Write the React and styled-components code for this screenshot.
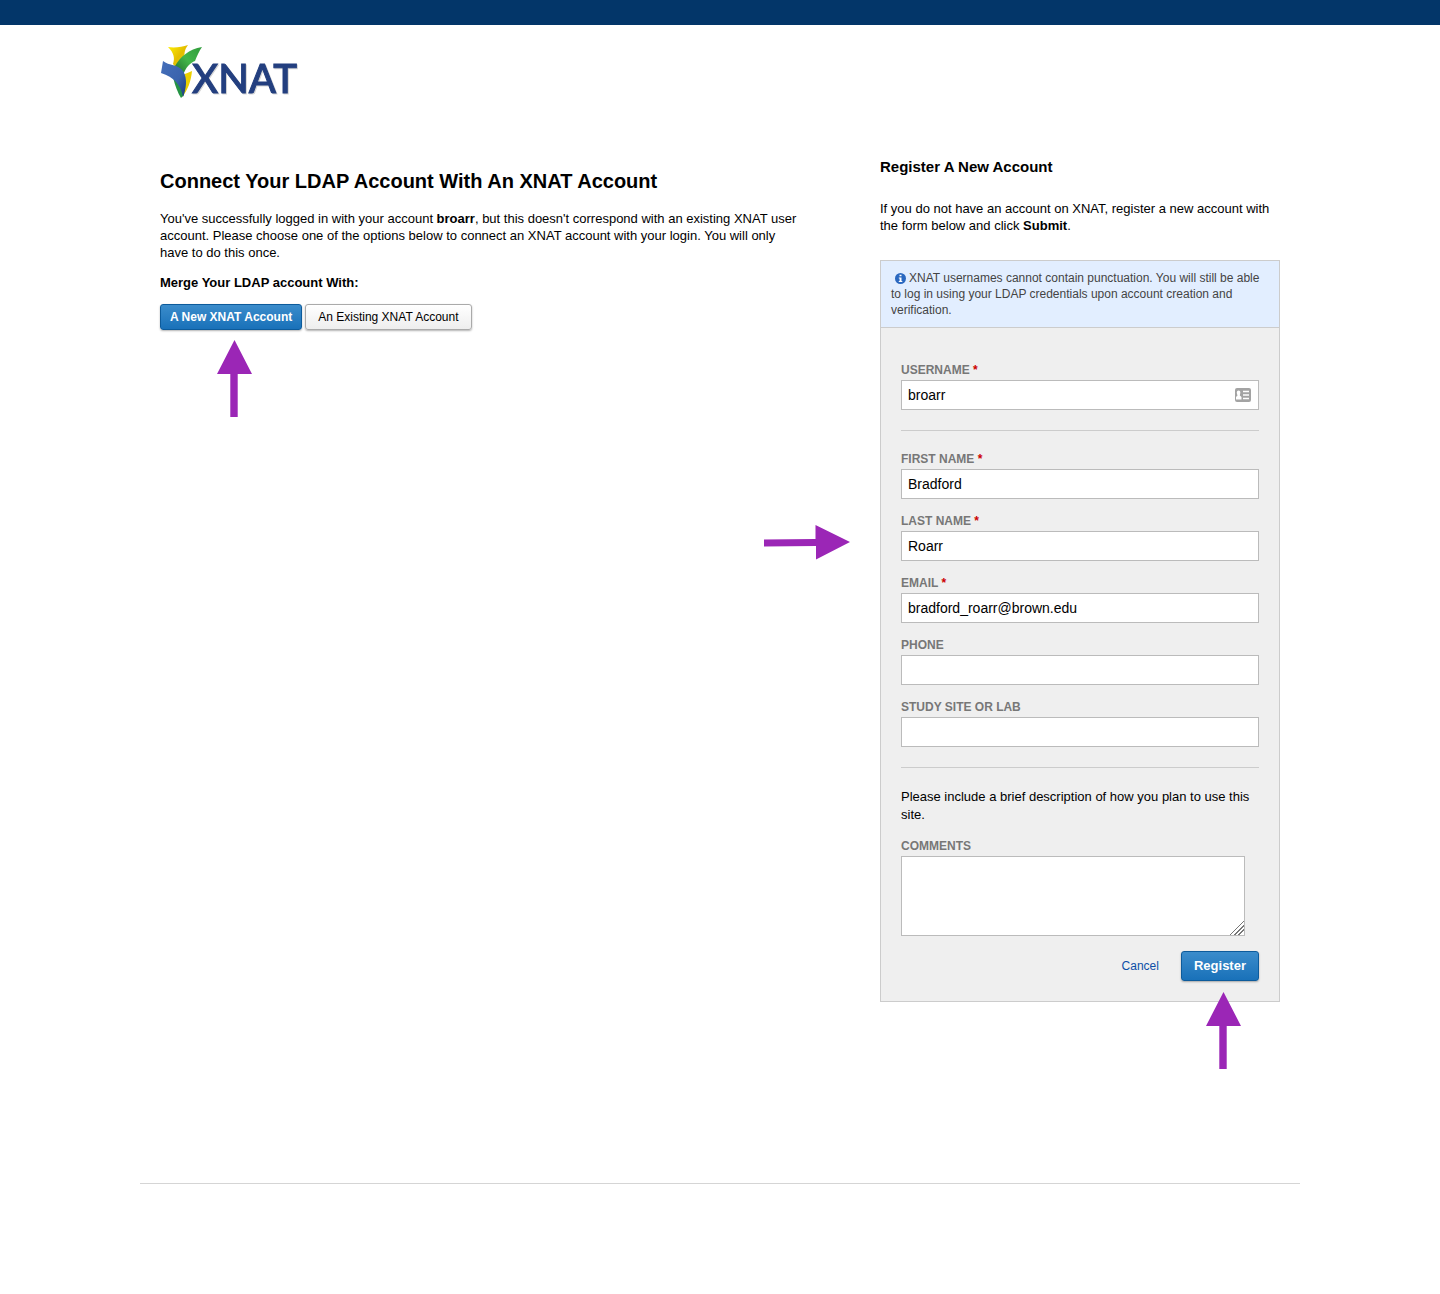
import React from "react";
import styled, { createGlobalStyle, css } from "styled-components";

const GlobalStyle = createGlobalStyle`
  *, *::before, *::after { box-sizing: border-box; }
  body {
    margin: 0;
    background: #fff;
    color: #000;
    font: 13px/17px Arial, "Liberation Sans", sans-serif;
  }
  h1, h2, p, hr { margin: 0; }
  button, input, textarea { font-family: inherit; margin: 0; }
`;

const TopBar = styled.div`
  height: 25px;
  background: #033669;
`;

const Page = styled.div`
  max-width: 1160px;
  margin: 0 auto;
  padding-bottom: 110px;
`;

const Header = styled.header`
  padding: 19px 20px 0;
`;

const LogoLink = styled.a`
  display: block;
  width: 140px;
`;

const LogoSvg = styled.svg`
  display: block;
  overflow: visible;

  text {
    font-family: Lato, "Open Sans", sans-serif;
    font-size: 40px;
    font-weight: 500;
    filter: drop-shadow(1px 1px 0 #d5d5d5);
  }
`;

const Main = styled.main`
  display: flex;
  align-items: flex-start;
  gap: 80px;
  padding: 58px 20px 181px;
  border-bottom: 1px solid #d5d5d5;
`;

const Intro = styled.section`
  flex: 1;
  min-width: 0;
  padding-top: 11px;
`;

const Title = styled.h1`
  font-size: 20px;
  line-height: 24px;
  margin-bottom: 17px;
`;

const Text = styled.p`
  margin-bottom: 13px;
`;

const ButtonRow = styled.div`
  display: flex;
  gap: 3px;
`;

const Anchor = styled.div`
  position: relative;
`;

const primary = css`
  padding: 0 ${(p) => (p.$large ? "12px" : "9px")};
  color: #fff;
  font-weight: 700;
  border-color: #0d5b9b;
  background: linear-gradient(#3b8ccb, #1971b9);
`;

const Button = styled.button`
  height: ${(p) => (p.$large ? "30px" : "26px")};
  padding: 0 12px;
  border: 1px solid #aaa;
  border-radius: 3px;
  background: linear-gradient(#fff, #eee);
  color: #000;
  font-size: ${(p) => (p.$large ? "13px" : "12px")};
  line-height: 16px;
  white-space: nowrap;
  box-shadow: 0 1px 2px rgba(0, 0, 0, 0.3);
  cursor: pointer;
  ${(p) => p.$primary && primary}
`;

const Aside = styled.section`
  position: relative;
  flex: 0 0 400px;
`;

const AsideTitle = styled.h2`
  font-size: 15px;
  line-height: 18px;
  margin-bottom: 24px;
`;

const AsideText = styled.p`
  margin-bottom: 26px;
`;

const Panel = styled.form`
  border: 1px solid #ccc;
  background: #efefef;
`;

const Notice = styled.div`
  padding: 9px 10px;
  border-bottom: 1px solid #ccc;
  background: #e2eeff;
  color: #444;
  font-size: 12px;
  line-height: 16px;
`;

const InfoIcon = styled.svg`
  margin: 0 3px 0 4px;
  vertical-align: -2px;
`;

const Fields = styled.div`
  padding: 34px 20px 20px;
`;

const Group = styled.div`
  display: flex;
  flex-direction: column;
  gap: 14px;
`;

const FieldBox = styled.div`
  display: flex;
  flex-direction: column;
  gap: 2px;
`;

const Label = styled.label`
  color: #777;
  font-size: 12px;
  font-weight: 700;
  line-height: 16px;
  text-transform: uppercase;
`;

const Required = styled.span`
  color: #c00;
`;

const InputWrap = styled.div`
  position: relative;
  display: flex;
`;

const Input = styled.input`
  flex: 1;
  min-width: 0;
  height: 30px;
  padding: 0 6px;
  border: 1px solid #bbb;
  border-radius: 0;
  background: #fff;
  color: #000;
  font-size: 14px;
`;

const CardIcon = styled.svg`
  position: absolute;
  right: 8px;
  top: 8px;
`;

const TextArea = styled.textarea`
  display: block;
  width: calc(100% - 14px);
  height: 80px;
  padding: 6px;
  border: 1px solid #bbb;
  border-radius: 0;
  background: #fff;
  font-size: 14px;
  resize: both;

  &::-webkit-resizer {
    background: linear-gradient(
      135deg,
      transparent 50%,
      #777 50% 56%,
      transparent 56% 64%,
      #777 64% 70%,
      transparent 70% 78%,
      #777 78% 84%,
      transparent 84%
    );
  }
`;

const Divider = styled.hr`
  height: 1px;
  margin: 20px 0;
  border: 0;
  background: #ccc;
`;

const Hint = styled.p`
  line-height: 18px;
`;

const Actions = styled.div`
  display: flex;
  justify-content: flex-end;
  align-items: center;
  gap: 22px;
  margin-top: 15px;
`;

const CancelLink = styled.a`
  color: #0d4ea6;
  font-size: 12px;
  text-decoration: none;
`;

const ArrowSvg = styled.svg`
  position: absolute;
  pointer-events: none;
  ${(p) =>
    p.$side === "left"
      ? css`
          right: calc(100% + 30px);
          top: 367px;
        `
      : css`
          top: ${p.$gap};
          left: calc(50% - 14px);
        `}
`;

function ArrowUp({ gap }) {
  return (
    <ArrowSvg $gap={gap} width="35" height="77" viewBox="0 0 35 77" aria-hidden="true">
      <path d="M17.5 0 35 34H20.7V77H13.3V34H0Z" fill="#9b26b6" />
    </ArrowSvg>
  );
}

function ArrowRight() {
  return (
    <ArrowSvg $side="left" width="87" height="35" viewBox="0 0 87 35" aria-hidden="true">
      <path d="M87 17 53 34.5V21L1 21.5V14.5L52.500 14V0Z" fill="#9b26b6" />
    </ArrowSvg>
  );
}

function Logo() {
  return (
    <LogoSvg width="140" height="56" viewBox="0 0 140 56" role="img" aria-label="XNAT">
      <defs>
        <linearGradient id="gold" x1="0" y1="0" x2="1" y2="1">
          <stop offset="0" stopColor="#fff000" />
          <stop offset="0.5" stopColor="#e3bd00" />
          <stop offset="1" stopColor="#f4df10" />
        </linearGradient>
        <linearGradient id="leaf" x1="1" y1="0" x2="0" y2="1">
          <stop offset="0" stopColor="#2f9c3c" />
          <stop offset="0.5" stopColor="#43b649" />
          <stop offset="1" stopColor="#1f6d2c" />
        </linearGradient>
        <linearGradient id="sky" x1="0" y1="0" x2="1" y2="1">
          <stop offset="0" stopColor="#456fba" />
          <stop offset="0.6" stopColor="#3a63ad" />
          <stop offset="1" stopColor="#1c3a78" />
        </linearGradient>
      </defs>
      <path d="M8 3C15 4 22 3 28 1C24 6 24 11 25 17L18 26L13 20C15 14 14 9 8 3Z" fill="url(#gold)" />
      <path d="M22 31C26 30 29 28 32 27C31 37 28 46 22 53Z" fill="#ecd000" />
      <path d="M15 22C20 13 29 5 42 3C39 7 37 12 35 17C30 19 26 23 23 31C21 27 19 24 15 22Z" fill="url(#leaf)" />
      <path d="M13 33C15 42 18 49 21 54L24 51C25 43 23 35 20 31Z" fill="#259344" />
      <path d="M3 17C9 22 18 20 23 27C28 35 26 45 23 53C21 41 14 33 1 29Z" fill="url(#sky)" />
      <text x="32" y="49" fill="#233f7f" stroke="#233f7f" strokeWidth="1">
        XNAT
      </text>
    </LogoSvg>
  );
}

function Field({ id, label, required, value, children }) {
  return (
    <FieldBox>
      <Label htmlFor={id}>
        {label} {required && <Required>*</Required>}
      </Label>
      <InputWrap>
        <Input id={id} name={id} type="text" required={required} defaultValue={value} />
        {children}
      </InputWrap>
    </FieldBox>
  );
}

export default function App() {
  return (
    <>
      <GlobalStyle />
      <TopBar />
      <Page>
        <Header>
          <LogoLink href="#home">
            <Logo />
          </LogoLink>
        </Header>
        <Main>
          <Intro>
            <Title>Connect Your LDAP Account With An XNAT Account</Title>
            <Text>
              You've successfully logged in with your account <b>broarr</b>, but this doesn't correspond with an
              existing XNAT user account. Please choose one of the options below to connect an XNAT account with your
              login. You will only have to do this once.
            </Text>
            <Text>
              <b>Merge Your LDAP account With:</b>
            </Text>
            <ButtonRow>
              <Anchor>
                <Button type="button" $primary>
                  A New XNAT Account
                </Button>
                <ArrowUp gap="36px" />
              </Anchor>
              <Button type="button">An Existing XNAT Account</Button>
            </ButtonRow>
          </Intro>
          <Aside>
            <AsideTitle>Register A New Account</AsideTitle>
            <AsideText>
              If you do not have an account on XNAT, register a new account with the form below and click{" "}
              <b>Submit</b>.
            </AsideText>
            <Panel onSubmit={(e) => e.preventDefault()}>
              <Notice>
                <InfoIcon width="11" height="11" viewBox="0 0 11 11" aria-hidden="true">
                  <circle cx="5.500" cy="5.500" r="5.500" fill="#2a68c0" />
                  <path d="M4.500 1.700H6.500V3.300H4.500ZM3.800 4.400H6.500V8H7.300V9H3.800V8H4.600V5.400H3.800Z" fill="#fff" />
                </InfoIcon>
                XNAT usernames cannot contain punctuation. You will still be able to log in using your LDAP credentials
                upon account creation and verification.
              </Notice>
              <Fields>
                <Field id="username" label="Username" required value="broarr">
                  <CardIcon width="16" height="14" viewBox="0 0 16 14" aria-hidden="true">
                    <rect width="16" height="14" rx="2" fill="#a3a3a3" />
                    <path
                      d="M3.500 2.500C5 2.500 5.500 3.500 5.300 5C5.200 6 4.800 6.500 4.800 7.500L6.500 9V11.500H1V9L2.500 7.500C2.300 6.500 1.900 6 1.800 5C1.700 3.500 2.300 2.500 3.500 2.500Z"
                      fill="#fff"
                    />
                    <path d="M8 3.500H14M8 7H14M8 10.500H14" stroke="#fff" strokeWidth="1.300" />
                  </CardIcon>
                </Field>
                <Divider />
                <Group>
                  <Field id="firstName" label="First Name" required value="Bradford" />
                  <Field id="lastName" label="Last Name" required value="Roarr" />
                  <Field id="email" label="Email" required value="bradford_roarr@brown.edu" />
                  <Field id="phone" label="Phone" />
                  <Field id="lab" label="Study Site or Lab" />
                </Group>
                <Divider />
                <Group>
                  <Hint>Please include a brief description of how you plan to use this site.</Hint>
                  <FieldBox>
                    <Label htmlFor="comments">Comments</Label>
                    <TextArea id="comments" name="comments" />
                  </FieldBox>
                </Group>
                <Actions>
                  <CancelLink href="#cancel">Cancel</CancelLink>
                  <Anchor>
                    <Button type="submit" $primary $large>
                      Register
                    </Button>
                    <ArrowUp gap="41px" />
                  </Anchor>
                </Actions>
              </Fields>
            </Panel>
            <ArrowRight />
          </Aside>
        </Main>
      </Page>
    </>
  );
}
